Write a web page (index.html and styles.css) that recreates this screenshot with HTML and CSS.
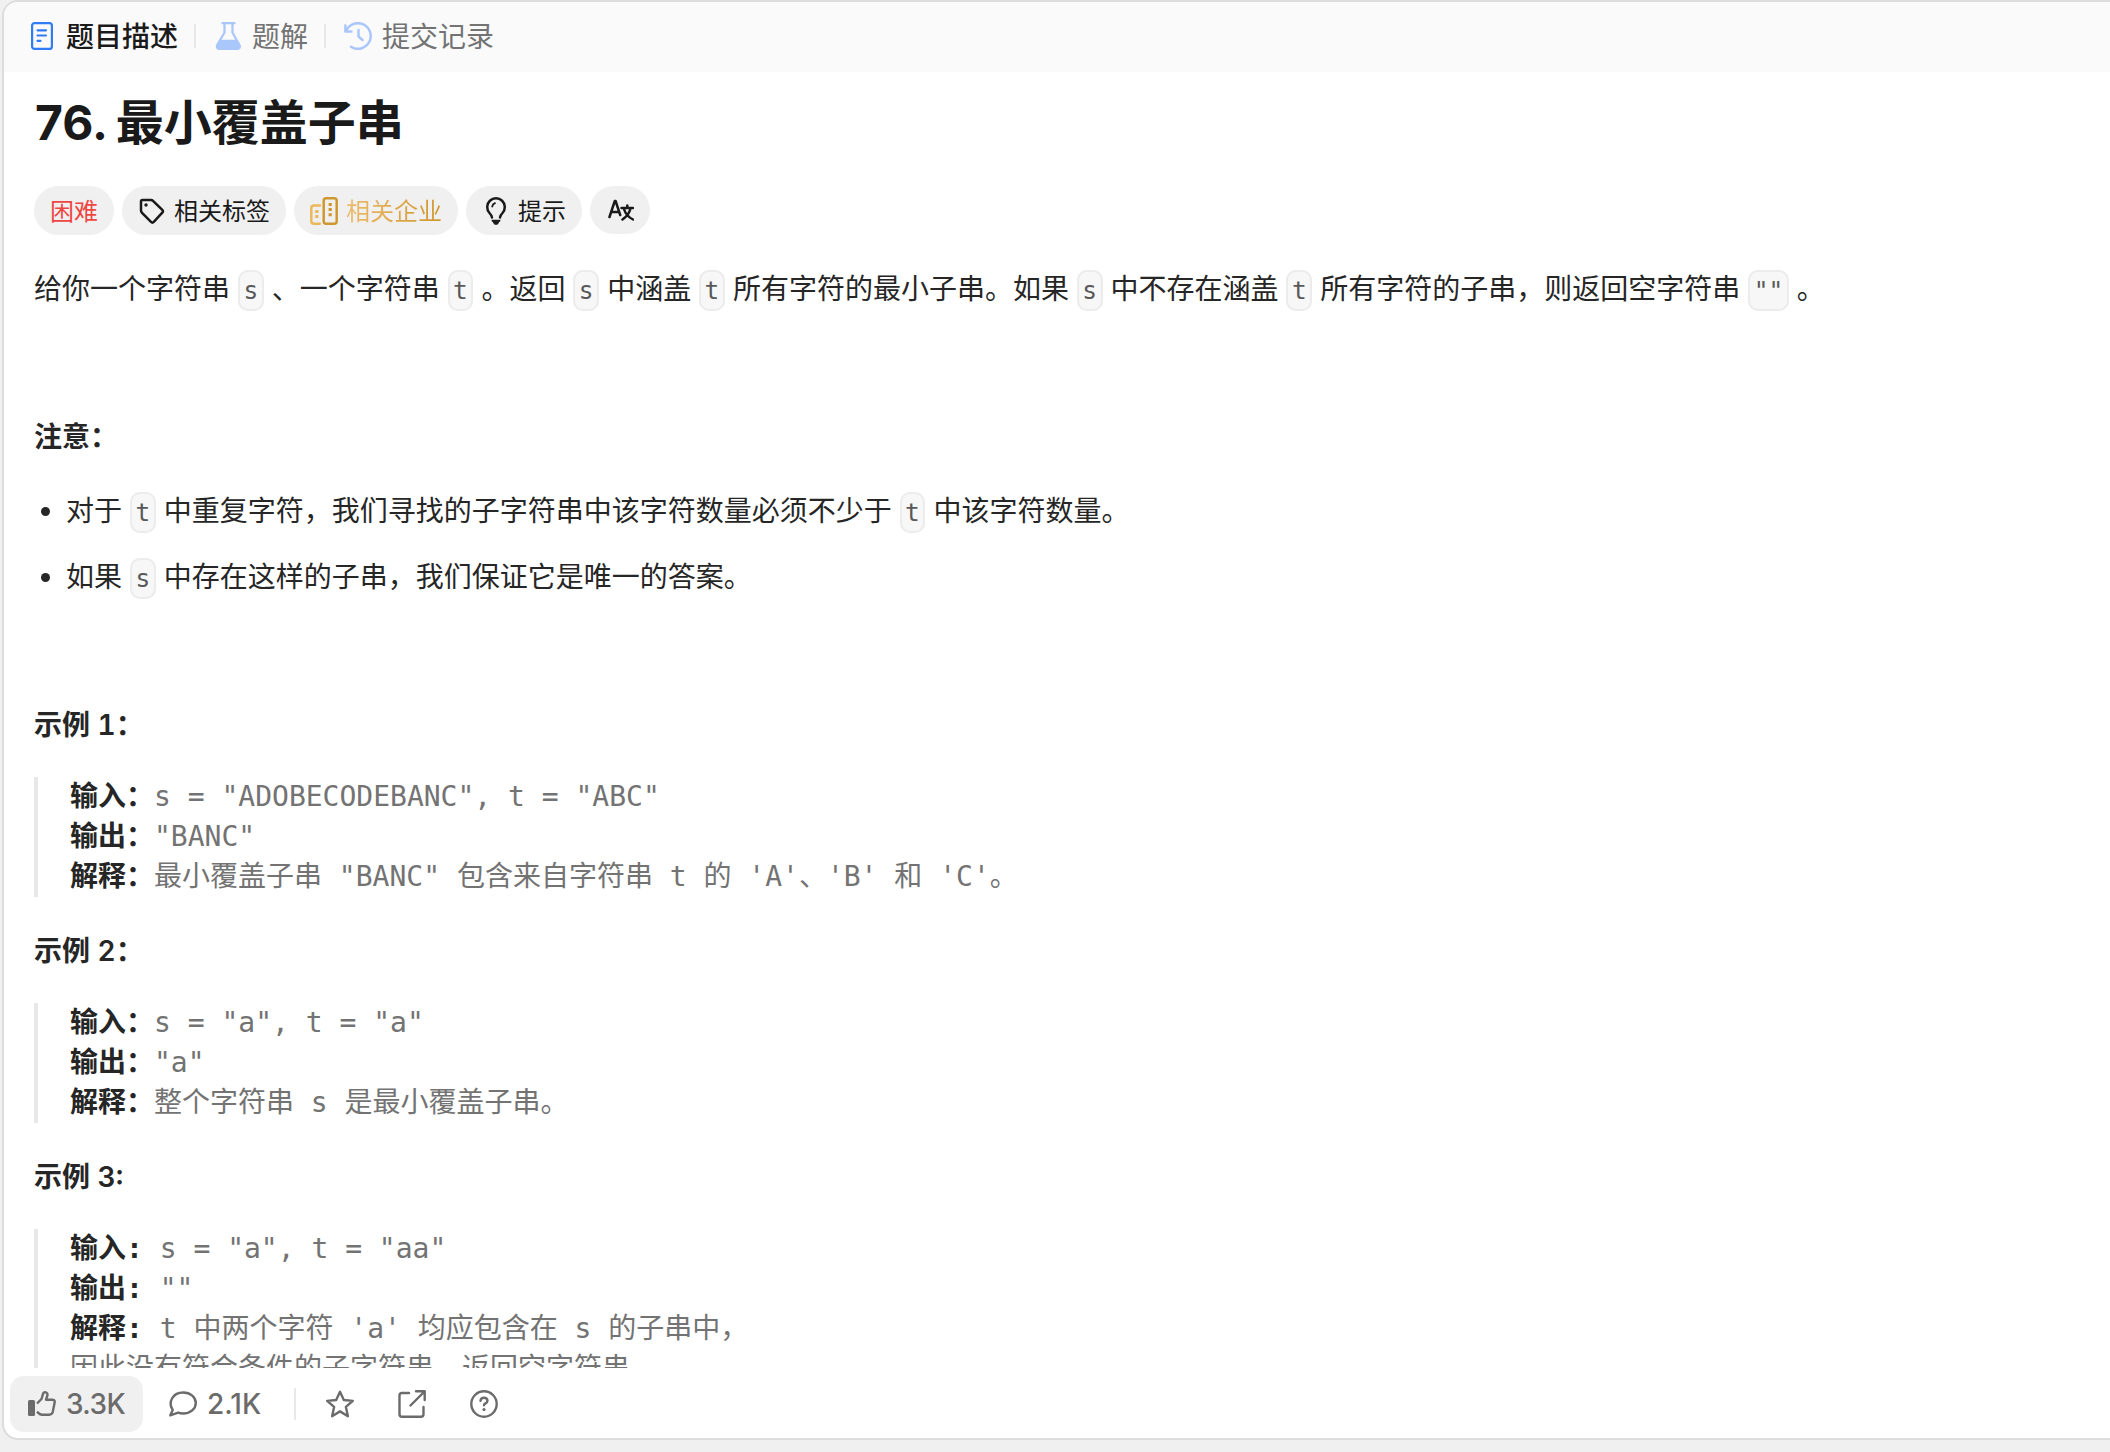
FILE: index.html
```html
<!DOCTYPE html>
<html lang="zh-CN">
<head>
    <meta charset="UTF-8">
    <meta name="viewport" content="width=device-width, initial-scale=1.0">
    <title>76. 最小覆盖子串</title>
    <link rel="stylesheet" href="styles.css">
</head>
<body>
    <div class="panel">
        <nav class="tabs">
            <a class="tab active">
                <svg width="28" height="28" viewBox="0 0 28 28" fill="none" stroke="#2f7cf6" stroke-width="2.200" stroke-linecap="round">
                    <rect x="4.100" y="1.100" width="19.800" height="25.800" rx="2.500"/>
                    <path d="M9.500 8.300h8.500M9.500 13.500h8.500M9.500 18.800h3"/>
                </svg>
                <span>题目描述</span>
            </a>
            <span class="divider"></span>
            <a class="tab">
                <svg width="28" height="28" viewBox="0 0 28 28" fill="none" stroke="#a9c7fb" stroke-width="2.300" stroke-linecap="round" stroke-linejoin="round">
                    <path d="M8.500 1.200h12M10.500 1.200v9.300L3.500 22.500Q1.500 26.900 6 26.900h16.500q4.500 0 2.500-4.400L18.500 10.500V1.200"/>
                    <path d="M6 19h17l2.500 4.500q.8 3.400-3 3.400H6q-3.500 0-2.500-3.900z" fill="#a9c7fb"/>
                </svg>
                <span>题解</span>
            </a>
            <span class="divider"></span>
            <a class="tab">
                <svg width="28" height="28" viewBox="0 0 28 28" fill="none" stroke="#a9c7fb" stroke-width="2.500" stroke-linecap="round" stroke-linejoin="round">
                    <path d="M1.400 3.500v6h6M2 9.300A12.800 12.800 0 1 1 7 24.800M14.500 8v6.500l4 3.500"/>
                </svg>
                <span>提交记录</span>
            </a>
        </nav>

        <div class="content">
            <h1>76. 最小覆盖子串</h1>
            <div class="tags">
                <span class="tag hard"><span>困难</span></span>
                <span class="tag">
                    <svg width="28" height="28" viewBox="0 0 28 28" fill="none" stroke="#1a1a1a" stroke-width="2.500" stroke-linejoin="round">
                        <path d="M4.500 3H13q1.200 0 2 .8l9.300 9q1.300 1.400 0 2.800l-8.500 9.300q-1.400 1.400-2.800 0L3.800 15.600Q3 14.800 3 13.600V4.500Q3 3 4.500 3z"/>
                        <circle cx="8" cy="8" r="1.700" fill="#1a1a1a" stroke="none"/>
                    </svg>
                    <span>相关标签</span>
                </span>
                <span class="tag company">
                    <svg width="28" height="28" viewBox="0 0 28 28" fill="none" stroke-width="2.500" stroke-linecap="round">
                        <path d="M10 8.500H4Q1.300 8.500 1.300 11v13Q1.300 26.700 4 26.700H9.800" stroke="#edb85c"/>
                        <rect x="13.700" y="1.300" width="13" height="25.500" rx="2.500" stroke="#cf972f"/>
                        <path d="M5.200 14.500h3.200M5.200 19.500h3.200" stroke="#edb85c" stroke-width="3" stroke-linecap="butt"/>
                        <path d="M18.600 7.500h3.200M18.600 12.500h3.200M18.600 17.800h3.200" stroke="#cf972f" stroke-width="3" stroke-linecap="butt"/>
                    </svg>
                    <span>相关企业</span>
                </span>
                <span class="tag">
                    <svg width="28" height="28" viewBox="0 0 28 28" fill="none" stroke="#1a1a1a" stroke-width="2.500" stroke-linecap="round">
                        <path d="M10 20.500Q9.700 18.300 7.500 16A8.800 8.800 0 1 1 20.500 16Q18.300 18.300 18 20.500"/>
                        <path d="M10.200 9.500Q10.700 7 13 6.200" stroke-width="1.800"/>
                        <path d="M9.500 22.700h9q0 2-1.500 2.500l-1 2.100q-2 1-4 0l-1-2.100q-1.500-.5-1.500-2.500z" fill="#1a1a1a" stroke="none"/>
                    </svg>
                    <span>提示</span>
                </span>
                <span class="tag lang">
                    <svg width="28" height="28" viewBox="0 0 28 28" fill="none" stroke="#1a1a1a" stroke-width="2.500" stroke-linecap="round" stroke-linejoin="round">
                        <path d="M3.500 21L8.800 5h.8l4.600 14M5.500 16h7M15.500 12h11.500M21.300 9.500V12M24.500 12.500Q23 19 16.500 23.500M18 13q2 7 9 10.500"/>
                    </svg>
                </span>
            </div>

            <div class="description">
                <p>给你一个字符串 <code>s</code> 、一个字符串 <code>t</code> 。返回 <code>s</code> 中涵盖 <code>t</code> 所有字符的最小子串。如果 <code>s</code> 中不存在涵盖 <code>t</code> 所有字符的子串，则返回空字符串 <code>""</code> 。</p>
                <p>&nbsp;</p>
                <p><strong>注意：</strong></p>
                <ul>
                    <li>对于 <code>t</code> 中重复字符，我们寻找的子字符串中该字符数量必须不少于 <code>t</code> 中该字符数量。</li>
                    <li>如果 <code>s</code> 中存在这样的子串，我们保证它是唯一的答案。</li>
                </ul>
                <p>&nbsp;</p>
                <p><strong>示例 1：</strong></p>
<pre><strong>输入：</strong>s = "ADOBECODEBANC", t = "ABC"
<strong>输出：</strong>"BANC"
<strong>解释：</strong>最小覆盖子串 "BANC" 包含来自字符串 t 的 'A'、'B' 和 'C'。
</pre>
                <p><strong>示例 2：</strong></p>
<pre><strong>输入：</strong>s = "a", t = "a"
<strong>输出：</strong>"a"
<strong>解释：</strong>整个字符串 s 是最小覆盖子串。
</pre>
                <p><strong>示例 3:</strong></p>
<pre><strong>输入:</strong> s = "a", t = "aa"
<strong>输出:</strong> ""
<strong>解释:</strong> t 中两个字符 'a' 均应包含在 s 的子串中，
因此没有符合条件的子字符串，返回空字符串。
</pre>
            </div>
        </div>

        <footer class="actions">
            <button class="action like">
                <svg width="28" height="28" viewBox="0 0 28 28" fill="none" stroke="#6b6b6b" stroke-width="2.400" stroke-linejoin="round">
                    <rect x="0" y="10" width="7" height="16" rx="1.500" fill="#6b6b6b" stroke="none"/>
                    <path d="M9 13.500l4.500-4.500 1.500-5q.9-2.500 3.200-1.500 1.700 1 1.200 3L18 9.700h6.300q2.700 0 2.400 2.600l-1.900 9.500q-.7 2.900-3.500 2.900H14q-2 0-3.500-1.500L9 21.700"/>
                </svg>
                <span>3.3K</span>
            </button>
            <button class="action comments">
                <svg width="28" height="28" viewBox="0 0 28 28" fill="none" stroke="#6b6b6b" stroke-width="2.400" stroke-linejoin="round">
                    <path d="M1.300 25.300l2.400-5.300C-1.500 12 4 2.500 14.200 2.500c7.300 0 12.600 4.700 12.600 10.500S21.500 23.500 14.200 23.500q-3 0-5-.8z"/>
                </svg>
                <span>2.1K</span>
            </button>
            <span class="divider"></span>
            <button class="action icon">
                <svg width="28" height="28" viewBox="0 0 28 28" fill="none" stroke="#6b6b6b" stroke-width="2.400" stroke-linejoin="round">
                    <path d="M14 1.800l3.800 8.200 9 .9-6.900 6 2 9.300-7.900-4.800-7.900 4.800 2-9.300-6.900-6 9-.9z"/>
                </svg>
            </button>
            <button class="action icon">
                <svg width="28" height="28" viewBox="0 0 28 28" fill="none" stroke="#6b6b6b" stroke-width="2.400" stroke-linecap="round" stroke-linejoin="round">
                    <path d="M11 3H4Q1.500 3 1.500 5.500V24q0 2.700 2.500 2.700h19q2.500 0 2.500-2.700v-7M18 1.300h8.700V10M26.500 1.500L12.500 15.500"/>
                </svg>
            </button>
            <button class="action icon">
                <svg width="28" height="28" viewBox="0 0 28 28" fill="none" stroke="#6b6b6b" stroke-width="2.400" stroke-linecap="round">
                    <circle cx="14" cy="14" r="12.700"/>
                    <path d="M10.500 10.800q.3-3 3.500-3t3.500 2.800q0 1.800-2 2.800-1.500.8-1.500 1.800"/>
                    <circle cx="14" cy="19.500" r="1.600" fill="#6b6b6b" stroke="none"/>
                </svg>
            </button>
        </footer>
    </div>
</body>
</html>
```
FILE: styles.css
```css
* {
    box-sizing: border-box;
}
body {
    margin: 0;
    height: 1452px;
    padding-left: 2px;
    background-color: #f0f0f0;
    font-family: Inter, "Noto Sans CJK SC", sans-serif;
    font-size: 28px;
    color: #262626;
    overflow: hidden;
}
.panel {
    display: flex;
    flex-direction: column;
    width: 2130px;
    height: 1440px;
    background-color: #fff;
    border: 2px solid #dcdcdc;
    border-radius: 16px;
    overflow: hidden;
}
.tabs {
    display: flex;
    flex: none;
    align-items: center;
    height: 70px;
    padding: 0 0 2px 24px;
    background-color: #fafafa;
}
.tab {
    display: flex;
    align-items: center;
    gap: 10px;
    line-height: 40px;
    color: #737373;
}
.tab span {
    padding-top: 1px;
}
.tab.active {
    color: #1a1a1a;
    font-weight: 500;
}
.divider {
    width: 2px;
    height: 24px;
    margin: 0 18px 0 16px;
    background-color: #e8e8e8;
}
.content {
    flex: 1;
    min-height: 0;
    padding: 19px 30px 0;
    overflow: hidden;
}
h1 {
    margin: 0;
    padding-left: 1px;
    font-size: 48px;
    line-height: 64px;
    font-weight: 700;
    color: #1a1a1a;
    word-spacing: -2px;
}
.tags {
    display: flex;
    align-items: flex-start;
    gap: 8px;
    margin-top: 31px;
}
.tag {
    display: flex;
    align-items: center;
    gap: 8px;
    height: 49px;
    padding: 0 16px;
    border-radius: 25px;
    background-color: #f0f0f0;
    font-size: 24px;
    color: #1a1a1a;
}
.tag span {
    padding-bottom: 3px;
}
.tag.hard {
    color: #ee4743;
}
.tag.company span {
    background: linear-gradient(90deg, #edbb6a, #cf972f);
    -webkit-background-clip: text;
    background-clip: text;
    color: transparent;
}
.tag.lang {
    height: 48px;
}
.description {
    margin-top: 32px;
    line-height: 44px;
}
.description p {
    margin: 0 0 30px;
}
code {
    margin-right: 0.2px;
    padding: 3.75px 3.5px;
    border: 2px solid #ececec;
    border-radius: 10px;
    background-color: #f7f7f8;
    font-family: "DejaVu Sans Mono", monospace;
    font-size: 24.5px;
    line-height: 1;
    color: #595959;
}
ul {
    margin: 0 0 30px;
    padding-left: 32px;
}
li {
    margin-bottom: 22px;
}
strong {
    font-weight: 600;
    font-variant-numeric: tabular-nums;
}
pre {
    margin: 0 0 32px;
    padding-left: 32px;
    border-left: 4px solid #e8e8e8;
    font-family: "DejaVu Sans Mono", "Noto Sans CJK SC", monospace;
    font-size: 28px;
    line-height: 40px;
    color: #737373;
}
pre strong {
    color: #262626;
}
.actions {
    display: flex;
    flex: none;
    align-items: center;
    height: 70px;
    padding: 2px 6px 0;
}
.actions .divider {
    height: 32px;
    margin: 0 8px 0 15px;
}
.action {
    display: flex;
    align-items: center;
    gap: 10px;
    height: 56px;
    padding: 0 16px 0 18px;
    border: none;
    border-radius: 14px;
    background: none;
    font-family: inherit;
    font-size: 28px;
    font-weight: 500;
    color: #6b6b6b;
}
.action.like {
    width: 133px;
    margin-right: 8px;
    background-color: #f0f0f0;
    letter-spacing: -0.6px;
}
.action.comments {
    width: 128px;
}
.action.icon {
    padding: 0 22px;
}
```
